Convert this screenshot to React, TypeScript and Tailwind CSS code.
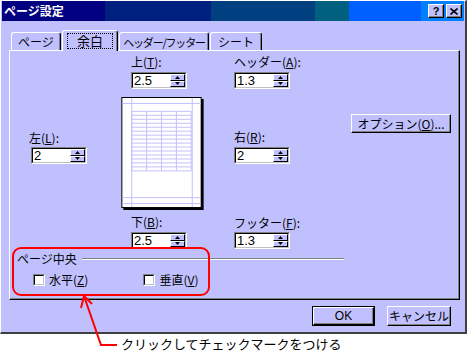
import React from 'react'

const tabs = [
  { label: 'ページ', cls: 'w-[50px] text-[12px]', active: false },
  { label: '余白', cls: 'ml-px w-[56px]', active: true },
  { label: 'ヘッダー/フッター', cls: 'ml-px w-[90px] text-[11px] tracking-[-1.2px]', active: false },
  { label: 'シート', cls: 'ml-px w-[52px] text-[12px]', active: false },
]

function Key({ k }: { k: string }) {
  return <span className="underline underline-offset-1">{k}</span>
}

function Label({ text, k, cls = '' }: { text: string; k: string; cls?: string }) {
  return (
    <div className={`h-[14px] whitespace-nowrap text-[12px] leading-[14px] ${cls}`}>
      {text}(<Key k={k} />):
    </div>
  )
}

function Arrow({ up }: { up?: boolean }) {
  return (
    <svg width="5" height="3" viewBox="0 0 5 3" className="block">
      {up ? <polygon points="2.5,0 5,3 0,3" fill="black" /> : <polygon points="0,0 5,0 2.5,3" fill="black" />}
    </svg>
  )
}

function Spin({ value, cls = '' }: { value: string; cls?: string }) {
  return (
    <div className={`flex h-[17px] w-[56px] border border-t-[#808080] border-l-[#808080] border-b-white border-r-white ${cls}`}>
      <div className="flex flex-1 border border-t-black border-l-black border-b-[#c0c0c0] border-r-[#c0c0c0] bg-white">
        <span className="flex-1 pl-px text-[13px] leading-[14px] font-['Liberation_Sans',sans-serif]">{value}</span>
        <div className="flex w-[15px] flex-col">
          <div className="flex flex-1 items-center justify-center border border-t-white border-l-white border-b-black border-r-black bg-[#c0c0ff]">
            <Arrow up />
          </div>
          <div className="flex flex-1 items-center justify-center border border-t-white border-l-white border-b-black border-r-black bg-[#c0c0ff]">
            <Arrow />
          </div>
        </div>
      </div>
    </div>
  )
}

function Check({ text, k, cls = '' }: { text: string; k: string; cls?: string }) {
  return (
    <div className={`flex items-center ${cls}`}>
      <div className="h-[12px] w-[12px] border border-t-[#808080] border-l-[#808080] border-b-white border-r-white">
        <div className="h-full w-full border border-t-black border-l-black border-b-[#c0c0c0] border-r-[#c0c0c0] bg-white" />
      </div>
      <span className="ml-[4px] text-[12px] leading-[14px]">
        {text}(<Key k={k} />)
      </span>
    </div>
  )
}

function Button({ children, cls = '', def }: { children: React.ReactNode; cls?: string; def?: boolean }) {
  const inner = (
    <div className="flex h-full w-full items-center justify-center border border-t-white border-l-white border-b-black border-r-black shadow-[inset_-1px_-1px_0_#808080] bg-[#c0c0ff] text-[12px] leading-[14px]">
      {children}
    </div>
  )
  return def ? <div className={`border border-black ${cls}`}>{inner}</div> : <div className={cls}>{inner}</div>
}

function Preview() {
  const rows = Array.from({ length: 16 }, (_, i) => 14.5 + i * 4)
  const cols = [10.5, 25.5, 40.5, 55.5, 70.5]
  return (
    <svg width="83" height="114" viewBox="0 0 83 114" className="mt-[8px] block">
      <rect x="2" y="2" width="81" height="112" fill="black" />
      <rect x="0" y="0" width="81" height="112" fill="black" />
      <rect x="1" y="1" width="79" height="110" fill="white" />
      <g stroke="#c0c0ff" strokeWidth="1">
        <line x1="10.5" y1="1" x2="10.5" y2="111" />
        <line x1="71.5" y1="1" x2="71.5" y2="111" />
        <line x1="1" y1="6.5" x2="80" y2="6.5" />
        <line x1="1" y1="101.5" x2="80" y2="101.5" />
        <line x1="1" y1="107.5" x2="80" y2="107.5" />
        {rows.map((y) => (
          <line key={y} x1="10.5" y1={y} x2="70.5" y2={y} />
        ))}
        {cols.map((x) => (
          <line key={x} x1={x} y1="14.5" x2={x} y2="74.5" />
        ))}
      </g>
    </svg>
  )
}

export default function App() {
  return (
    <div className="relative h-[360px] w-[467px] overflow-hidden bg-white font-['Noto_Sans_CJK_JP',sans-serif] text-black">
      <div className="h-[334px] w-[467px] border-l border-t border-r-2 border-b-2 border-l-white border-t-white border-r-[#404040] border-b-[#404040] bg-[#c0c0ff] px-px">
        {/* title bar */}
        <div className="flex h-[20px] w-[462px] items-center bg-[linear-gradient(to_right,#000080_0_103px,#00207f_103px_209px,#004080_209px_313px,#006080_313px_347px,#0060ff_347px_419px,#0080ff_419px)] pl-[2px] pr-[2px]">
          <span className="text-[12px] font-bold leading-[14px] text-white">ページ設定</span>
          <div className="ml-auto flex gap-[2px]">
            <div className="flex h-[14px] w-[16px] items-center justify-center border border-t-white border-l-white border-b-black border-r-black shadow-[inset_-1px_-1px_0_#808080] bg-[#c0c0ff] text-[11px] font-bold leading-none font-['Liberation_Sans',sans-serif]">?</div>
            <div className="flex h-[14px] w-[16px] items-center justify-center border border-t-white border-l-white border-b-black border-r-black shadow-[inset_-1px_-1px_0_#808080] bg-[#c0c0ff]">
              <svg width="8" height="7" viewBox="0 0 8 7">
                <path d="M0.5 0.5 L7.5 6.5 M7.5 0.5 L0.5 6.5" stroke="black" strokeWidth="1.6" />
              </svg>
            </div>
          </div>
        </div>

        {/* tabs */}
        <div className="ml-[9px] mt-[9px] flex h-[20px] items-end">
          {tabs.map((t) =>
            t.active ? (
              <div key={t.label} className={`relative z-10 -mb-px flex h-[21px] items-center justify-center rounded-t-[3px] border-l border-t border-r border-l-white border-t-white border-r-black bg-[#c0c0ff] shadow-[inset_-1px_0_0_#808080] ${t.cls}`}>
                <div className="flex h-[16px] w-[46px] items-center justify-center border border-dotted border-black text-[13px] leading-[14px]">{t.label}</div>
              </div>
            ) : (
              <div key={t.label} className={`flex h-[18px] items-center justify-center overflow-hidden rounded-t-[3px] border-l border-t border-r border-l-white border-t-white border-r-black shadow-[inset_-1px_0_0_#808080] leading-[14px] whitespace-nowrap ${t.cls}`}>
                {t.label}
              </div>
            )
          )}
        </div>

        {/* panel */}
        <div className="ml-[7px] flex h-[250px] w-[451px] flex-col border border-t-white border-l-white border-r-black border-b-black shadow-[inset_-1px_-1px_0_#808080]">
          <div className="flex h-[198px]">
            <div className="ml-[19px] flex w-[59px] flex-col pt-[80px]">
              <Label text="左" k="L" />
              <Spin value="2" cls="ml-[2px] mt-[2px]" />
            </div>
            <div className="ml-[33px] flex w-[83px] flex-col pt-[4px]">
              <Label text="上" k="T" cls="ml-[10px]" />
              <Spin value="2.5" cls="ml-[10px] mt-[3px]" />
              <Preview />
              <Label text="下" k="B" cls="ml-[10px] mt-[5px]" />
              <Spin value="2.5" cls="ml-[10px] mt-[3px]" />
            </div>
            <div className="ml-[30px] flex w-[56px] flex-col pt-[4px]">
              <Label text="ヘッダー" k="A" />
              <Spin value="1.3" cls="mt-[3px]" />
              <Label text="右" k="R" cls="mt-[41px]" />
              <Spin value="2" cls="mt-[3px]" />
              <Label text="フッター" k="F" cls="mt-[52px]" />
              <Spin value="1.3" cls="mt-[2px]" />
            </div>
            <div className="ml-[61px] pt-[63px]">
              <Button cls="h-[19px] w-[100px]">
                <span>
                  オプション(<Key k="O" />)...
                </span>
              </Button>
            </div>
          </div>

          {/* group */}
          <div className="ml-[7px] mt-[3px] w-[327px]">
            <div className="flex h-[14px] items-center">
              <span className="whitespace-nowrap text-[12px] leading-[14px]">ページ中央</span>
              <div className="ml-[5px] h-[2px] flex-1 border-t border-b border-t-[#808080] border-b-white" />
            </div>
            <div className="mt-[7px] flex">
              <Check text="水平" k="Z" cls="ml-[16px]" />
              <Check text="垂直" k="V" cls="ml-[55px]" />
            </div>
          </div>
        </div>

        {/* dialog buttons */}
        <div className="ml-[310px] mt-[6px] flex gap-[12px]">
          <Button def cls="h-[20px] w-[63px]">
            <span className="font-['Liberation_Sans',sans-serif]">OK</span>
          </Button>
          <Button cls="h-[20px] w-[64px]">キャンセル</Button>
        </div>
      </div>

      <div className="ml-[121px] mt-[1px] text-[13px] leading-[18px]">クリックしてチェックマークをつける</div>

      {/* red annotation overlay */}
      <svg className="pointer-events-none absolute left-0 top-0" width="467" height="360" viewBox="0 0 467 360">
        <rect x="13" y="248" width="196" height="47" rx="8" fill="none" stroke="#ff0000" strokeWidth="2" />
        <path d="M84 296 L101 345 L117 345 M84 296 L81 308 M84 296 L92 304" fill="none" stroke="#ff0000" strokeWidth="2" />
      </svg>
    </div>
  )
}
